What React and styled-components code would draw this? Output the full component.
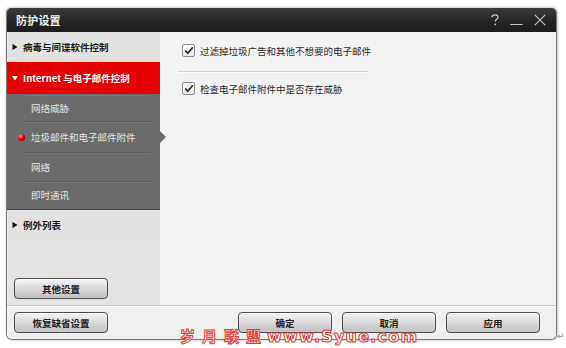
import React from "react";
import styled, { createGlobalStyle } from "styled-components";

const Global = createGlobalStyle`
  html, body { margin: 0; padding: 0; background: #ffffff; }
  body { font-family: "Noto Sans CJK SC", "Noto Sans", sans-serif; }
  * { box-sizing: border-box; }
`;

const Page = styled.div`
  position: relative;
  width: 566px;
  height: 348px;
  padding: 8px 0 0 6px;
`;

const Window = styled.div`
  width: 551px;
  height: 332px;
  display: flex;
  flex-direction: column;
  border: 1px solid #7c7c7c;
  border-top: none;
  border-radius: 5px 5px 6px 6px;
  overflow: hidden;
  box-shadow: 0 -1px 3px rgba(0, 0, 0, 0.18), 1px 1px 2px rgba(0, 0, 0, 0.15);
  background: #f0f0f0;
`;

const TitleBar = styled.div`
  height: 24px;
  flex: none;
  display: flex;
  align-items: center;
  padding: 0 10px 0 9px;
  background: linear-gradient(#3b3b3b, #232323 60%, #1c1c1c);
  color: #f2f2f2;
`;

const Title = styled.div`
  flex: 1;
  font-size: 11px;
  font-weight: bold;
  letter-spacing: 0.2px;
`;

const TitleIcons = styled.div`
  display: flex;
  align-items: center;
  gap: 11px;
  color: #c4c4c4;
`;

const Main = styled.div`
  flex: 1;
  display: flex;
  min-height: 0;
`;

const Sidebar = styled.div`
  width: 153px;
  flex: none;
  display: flex;
  flex-direction: column;
  background: #e4e4e4;
`;

const NavItem = styled.div`
  height: ${(p) => p.$h}px;
  display: flex;
  align-items: center;
  padding-left: 5px;
  gap: 5px;
  font-size: 9.5px;
  font-weight: bold;
  color: ${(p) => (p.$active ? "#ffffff" : "#1a1a1a")};
  background: ${(p) => (p.$active ? "#e20000" : "#e2e2e2")};
`;

const SubMenu = styled.div`
  background: #6b6b6b;
  border-bottom: 1px solid #4a4a4a;
  display: flex;
  flex-direction: column;
`;

const SubItem = styled.div`
  position: relative;
  height: ${(p) => p.$h}px;
  display: flex;
  align-items: center;
  padding-left: 24px;
  font-size: 9.5px;
  color: #e2e2e2;
  &::before {
    content: "";
    position: absolute;
    left: 17px;
    right: 10px;
    top: 0;
    height: 1px;
    background: ${(p) => (p.$first ? "transparent" : "#5c5c5c")};
    box-shadow: 0 1px 0 #777;
  }
`;

const Dot = styled.span`
  position: absolute;
  left: 11px;
  top: 50%;
  width: 7px;
  height: 7px;
  margin-top: -3px;
  border-radius: 50%;
  background: radial-gradient(circle at 35% 30%, #ff8a8a, #e00000 50%, #8a0000);
`;

const Pointer = styled.span`
  position: absolute;
  right: -6px;
  top: 50%;
  margin-top: -6px;
  width: 0;
  height: 0;
  border-top: 6px solid transparent;
  border-bottom: 6px solid transparent;
  border-left: 6px solid #6b6b6b;
`;

const Spacer = styled.div`
  flex: 1;
`;

const Button = styled.div`
  width: 94px;
  height: 21px;
  flex: none;
  display: flex;
  align-items: center;
  justify-content: center;
  border: 1px solid #4e4e4e;
  border-radius: 4px;
  background: linear-gradient(#f6f6f6, #dcdcdc 45%, #c2c2c2);
  box-shadow: inset 0 1px 0 #ffffff;
  font-size: 9.5px;
  font-weight: bold;
  color: #222;
`;

const SideButtonWrap = styled.div`
  padding: 0 0 6px 7px;
`;

const Content = styled.div`
  flex: 1;
  background: #f2f2f2;
  padding: 12px 0 0 18px;
  display: flex;
  flex-direction: column;
`;

const CheckRow = styled.div`
  display: flex;
  align-items: center;
  gap: 5px;
  padding-left: 4px;
  height: 13px;
  font-size: 9.5px;
  color: #2a2a2a;
`;

const Box = styled.span`
  width: 13px;
  height: 13px;
  flex: none;
  border: 1px solid #8e8e8e;
  border-radius: 2px;
  background: linear-gradient(#ffffff, #e6e6e6);
  display: flex;
  align-items: center;
  justify-content: center;
`;

const Divider = styled.div`
  width: 190px;
  height: 1px;
  background: #d2d2d2;
  box-shadow: 0 1px 0 #fbfbfb;
  margin: 14px 0 10px;
`;

const Footer = styled.div`
  height: 34px;
  flex: none;
  display: flex;
  align-items: flex-start;
  padding: 6px 0 0 7px;
  border-top: 1px solid #c9c9c9;
  box-shadow: inset 0 1px 0 #fafafa;
  background: #efefef;
  gap: 10px;
`;

const FooterGap = styled.div`
  width: 110px;
  flex: none;
`;

const Watermark = styled.div`
  position: absolute;
  left: 180px;
  top: 327px;
  display: flex;
  align-items: baseline;
  gap: 7px;
  color: #ffffff;
  -webkit-text-stroke: 1px #e23a3a;
  font-weight: bold;
  pointer-events: none;
`;

const WmCn = styled.span`
  font-family: "Noto Sans CJK SC", sans-serif;
  font-size: 15px;
  line-height: 18px;
`;

const WmEn = styled.span`
  font-family: "DejaVu Sans", sans-serif;
  font-size: 16px;
  line-height: 18px;
  letter-spacing: 1.2px;
  margin-left: -1px;
`;

const Return = styled.span`
  position: absolute;
  left: 557px;
  top: 331px;
  font-size: 9px;
  color: #8a8a8a;
  font-family: "DejaVu Sans", sans-serif;
`;

const Tri = ({ down, color }) => (
  <svg width="6" height="6" viewBox="0 0 6 6">
    {down ? (
      <polygon points="0,1 6,1 3,5.5" fill={color} />
    ) : (
      <polygon points="0.5,0 5.5,3 0.5,6" fill={color} />
    )}
  </svg>
);

const Check = () => (
  <svg width="10" height="9" viewBox="0 0 10 9">
    <polyline points="1.2,4.5 3.8,7.2 8.8,1.2" fill="none" stroke="#2b2b2b" strokeWidth="1.7" />
  </svg>
);

export default function App() {
  return (
    <Page>
      <Global />
      <Window>
        <TitleBar>
          <Title>防护设置</Title>
          <TitleIcons>
            <svg width="8" height="12" viewBox="0 0 8 12">
              <path d="M1 3.2 C1 1.4 2.4 0.8 4 0.8 C5.7 0.8 7 1.8 7 3.3 C7 5.2 4.2 5.4 4.2 7.6" fill="none" stroke="#c4c4c4" strokeWidth="1.3" />
              <rect x="3.5" y="9.6" width="1.4" height="1.6" fill="#c4c4c4" />
            </svg>
            <svg width="13" height="12" viewBox="0 0 13 12">
              <line x1="0.5" y1="10.5" x2="12.5" y2="10.5" stroke="#c4c4c4" strokeWidth="1.2" />
            </svg>
            <svg width="12" height="12" viewBox="0 0 12 12">
              <path d="M0.8 0.8 L11.2 11.2 M11.2 0.8 L0.8 11.2" stroke="#c4c4c4" strokeWidth="1.1" />
            </svg>
          </TitleIcons>
        </TitleBar>
        <Main>
          <Sidebar>
            <NavItem $h={30}>
              <Tri color="#111" />
              病毒与间谍软件控制
            </NavItem>
            <NavItem $h={32} $active>
              <Tri down color="#fff" />
              Internet 与电子邮件控制
            </NavItem>
            <SubMenu>
              <SubItem $h={27} $first>网络威胁</SubItem>
              <SubItem $h={31}>
                <Dot />
                垃圾邮件和电子邮件附件
                <Pointer />
              </SubItem>
              <SubItem $h={29}>网络</SubItem>
              <SubItem $h={28}>即时通讯</SubItem>
            </SubMenu>
            <NavItem $h={29}>
              <Tri color="#111" />
              例外列表
            </NavItem>
            <Spacer />
            <SideButtonWrap>
              <Button>其他设置</Button>
            </SideButtonWrap>
          </Sidebar>
          <Content>
            <CheckRow>
              <Box><Check /></Box>
              过滤掉垃圾广告和其他不想要的电子邮件
            </CheckRow>
            <Divider />
            <CheckRow>
              <Box><Check /></Box>
              检查电子邮件附件中是否存在威胁
            </CheckRow>
          </Content>
        </Main>
        <Footer>
          <Button>恢复缺省设置</Button>
          <FooterGap />
          <Button>确定</Button>
          <Button>取消</Button>
          <Button>应用</Button>
        </Footer>
      </Window>
      <Watermark>
        {["岁", "月", "联", "盟"].map((c) => (
          <WmCn key={c}>{c}</WmCn>
        ))}
        <WmEn>www.Syue.com</WmEn>
      </Watermark>
      <Return>↵</Return>
    </Page>
  );
}
